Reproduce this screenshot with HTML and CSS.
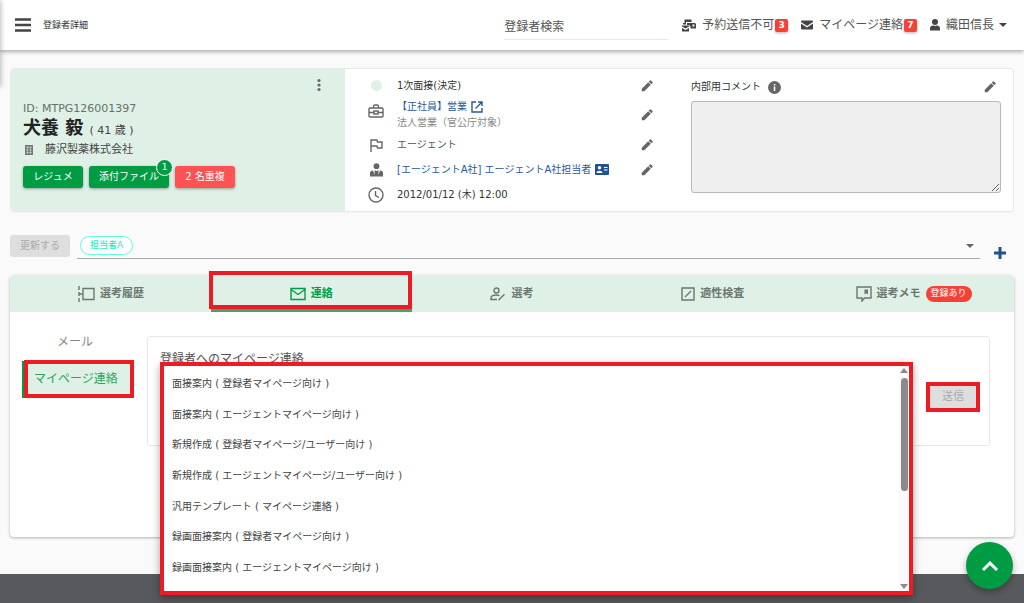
FILE: index.html
```html
<!DOCTYPE html>
<html lang="ja">
<head>
    <meta charset="UTF-8">
    <meta name="viewport" content="width=device-width, initial-scale=1.0">
    <title>登録者詳細</title>
    <link rel="stylesheet" href="styles.css">
</head>
<body>
    <svg class="defs">
        <symbol id="pencil" viewBox="0 0 24 24"><path d="M3 16.500V21h4.500L18.500 10l-4.500-4.500zM21.500 7a1.200 1.200 0 0 0 0-1.700l-2.800-2.800a1.200 1.200 0 0 0-1.700 0L15 4.500 19.500 9z"/></symbol>
        <symbol id="caret" viewBox="0 0 8 4"><path d="M0 0h8L4 4z"/></symbol>
    </svg>

    <div class="drawer"></div>

    <header class="header">
        <button class="icon-btn" aria-label="メニュー">
            <svg class="menu-icon" viewBox="0 0 16 14"><path d="M0 1.500h16M0 7h16M0 12.500h16"/></svg>
        </button>
        <h1 class="page-title">登録者詳細</h1>
        <input class="search" type="text" placeholder="登録者検索" aria-label="登録者検索">
        <nav class="header-nav">
            <a class="nav-item" href="#">
                <svg width="14" height="13" viewBox="0 0 28 26"><path d="M5 1h14v5H8v5H2V8h3zM10 8h16l2 2v9H17v-4l-3-3h-4zM0 13h14v2l-7 4-7-4zM0 18l7 4 7-4v6a1 1 0 0 1-1 1H1a1 1 0 0 1-1-1z"/><path class="cut" d="M21 11h4v4h-4z"/></svg>
                <span>予約送信不可</span><b class="badge">3</b>
            </a>
            <a class="nav-item" href="#">
                <svg width="12" height="10" viewBox="0 0 24 20"><path d="M2 1h20a2 2 0 0 1 2 2v1L12 12 0 4V3a2 2 0 0 1 2-2zM0 7l12 8 12-8v10a2 2 0 0 1-2 2H2a2 2 0 0 1-2-2z"/></svg>
                <span>マイページ連絡</span><b class="badge">7</b>
            </a>
            <a class="nav-item" href="#">
                <svg width="10" height="12" viewBox="0 0 20 24"><circle cx="10" cy="6" r="6"/><path d="M0 23v-4c0-4 3-6 6-6 3 1 5 1 8 0 3 0 6 2 6 6v4z"/></svg>
                <span>織田信長</span><svg class="user-caret" width="8" height="4"><use href="#caret"/></svg>
            </a>
        </nav>
    </header>

    <main class="main">
        <section class="profile">
            <div class="person">
                <button class="icon-btn more" aria-label="その他">
                    <svg width="4" height="14" viewBox="0 0 4 14"><circle cx="2" cy="2.500" r="1.600"/><circle cx="2" cy="7" r="1.600"/><circle cx="2" cy="11.500" r="1.600"/></svg>
                </button>
                <p class="person-id">ID: MTPG126001397</p>
                <h2 class="person-name">犬養 毅 <span class="age">( 41 歳 )</span></h2>
                <p class="company">
                    <svg width="8" height="10" viewBox="0 0 8 10"><path d="M0 0h8v10H0z"/><path class="windows" d="M2.500 1v8M5.500 1v8M1 2.500h6M1 5h6M1 7.500h6"/></svg>
                    <span>藤沢製薬株式会社</span>
                </p>
                <div class="actions">
                    <button class="btn">レジュメ</button>
                    <button class="btn">添付ファイル<span class="count">1</span></button>
                    <button class="btn btn-red">2 名重複</button>
                </div>
            </div>

            <ul class="details">
                <li class="row">
                    <span class="row-icon"><i class="dot"></i></span>
                    <span class="row-text">1次面接(決定)</span>
                    <button class="icon-btn" aria-label="編集"><svg class="pencil"><use href="#pencil"/></svg></button>
                </li>
                <li class="row row-tall">
                    <span class="row-icon"><svg class="line" width="16" height="16" viewBox="0 0 16 16"><path d="M2 5h12a1 1 0 0 1 1 1v7a1 1 0 0 1-1 1H2a1 1 0 0 1-1-1V6a1 1 0 0 1 1-1zM5.500 5V3l1-1h3l1 1v2M1 9.500h5M10 9.500h5M6 8h4v3H6z"/></svg></span>
                    <span class="row-text">
                        <a href="#">【正社員】営業
                            <svg class="link-icon" width="12" height="12" viewBox="0 0 12 12"><path d="M5 1H1v10h10V7M7 1h4v4M11 1L4.500 7.500"/></svg>
                        </a>
                        <small>法人営業（官公庁対象）</small>
                    </span>
                    <button class="icon-btn" aria-label="編集"><svg class="pencil"><use href="#pencil"/></svg></button>
                </li>
                <li class="row">
                    <span class="row-icon"><svg class="line" width="14" height="14" viewBox="0 0 14 14"><path d="M2 14V2h6l.5 2H13v6H8.500L8 8H2"/></svg></span>
                    <span class="row-text muted">エージェント</span>
                    <button class="icon-btn" aria-label="編集"><svg class="pencil"><use href="#pencil"/></svg></button>
                </li>
                <li class="row">
                    <span class="row-icon"><svg width="13" height="14" viewBox="0 0 13 14"><circle cx="6.500" cy="3.200" r="2.900"/><path d="M0 13.500V10c0-1.500 1-2.300 3-2.600l1.500 4.600V7.300L6.500 8l2-.7V12L10 7.400c2 .3 3 1.100 3 2.600v3.500zM6 9h1l.7 3.500h-2.400z"/></svg></span>
                    <span class="row-text">
                        <a href="#">[エージェントA社] エージェントA社担当者
                            <svg class="card-icon" width="14" height="11" viewBox="0 0 14 11"><rect width="14" height="11" rx="1"/><circle cx="4.500" cy="3.800" r="1.700"/><path d="M1.500 9c0-3 6-3 6 0zM9 3h3.500v1H9zM9 5.500h3.500v1H9z"/></svg>
                        </a>
                    </span>
                    <button class="icon-btn" aria-label="編集"><svg class="pencil"><use href="#pencil"/></svg></button>
                </li>
                <li class="row">
                    <span class="row-icon"><svg class="line" width="16" height="16" viewBox="0 0 16 16"><circle cx="8" cy="8" r="7"/><path d="M7.500 4v4.500l3.500 2"/></svg></span>
                    <span class="row-text">2012/01/12 (木) 12:00</span>
                </li>
            </ul>

            <div class="comment">
                <div class="comment-head">
                    <label for="comment">内部用コメント</label>
                    <svg class="info" width="13" height="13" viewBox="0 0 13 13"><circle cx="6.500" cy="6.500" r="6.500"/><path d="M5.800 5.600h1.500v4.400H5.800zM5.800 3h1.500v1.500H5.800z"/></svg>
                    <button class="icon-btn" aria-label="編集"><svg class="pencil"><use href="#pencil"/></svg></button>
                </div>
                <textarea id="comment" disabled></textarea>
            </div>
        </section>

        <div class="assign">
            <button class="btn btn-disabled" disabled>更新する</button>
            <div class="combo">
                <span class="chip">担当者A</span>
                <input type="text" aria-label="担当者">
                <button class="icon-btn" aria-label="開く"><svg width="8" height="4"><use href="#caret"/></svg></button>
            </div>
            <button class="icon-btn add" aria-label="追加"><svg class="plus" width="12" height="12" viewBox="0 0 12 12"><path d="M6 0v12M0 6h12"/></svg></button>
        </div>

        <section class="card">
            <nav class="tabs">
                <a class="tab" href="#">
                    <svg class="line" width="18" height="16" viewBox="0 0 18 16"><path d="M2 0v4M2 6v4M2 12v4M2 8h4M6 2.500h11v11H6z"/></svg>
                    <span>選考履歴</span>
                </a>
                <a class="tab active" href="#">
                    <svg class="line" width="16" height="14" viewBox="0 0 16 14"><path d="M1 1.500h14v11H1zM1 2.500l7 5 7-5"/></svg>
                    <span>連絡</span>
                </a>
                <a class="tab" href="#">
                    <svg class="line" width="16" height="14" viewBox="0 0 16 14"><circle cx="6.500" cy="3.500" r="2.500"/><path d="M7 12.500H1v-1.500c0-2 3-3 5.500-3 1 0 2 .2 3 .6M8.500 13.300l6-6"/></svg>
                    <span>選考</span>
                </a>
                <a class="tab" href="#">
                    <svg class="line" width="14" height="14" viewBox="0 0 14 14"><path d="M1 1h12v12H1zM4 10l6-6"/></svg>
                    <span>適性検査</span>
                </a>
                <a class="tab" href="#">
                    <svg class="line" width="16" height="16" viewBox="0 0 16 16"><path d="M1 1h14v11H8.500L6 15v-3H1z"/><path class="fill" d="M8.500 3.500h3.500v5l-1.700-1.200L8.500 8.500z"/></svg>
                    <span>選考メモ</span><em class="pill">登録あり</em>
                </a>
            </nav>

            <div class="card-body">
                <nav class="side">
                    <a class="side-item" href="#">メール</a>
                    <a class="side-item active" href="#">マイページ連絡</a>
                </nav>
                <div class="panel">
                    <h3>登録者へのマイページ連絡</h3>
                    <button class="btn btn-disabled send" disabled>送信</button>

                    <div class="dropdown">
                        <ul class="options" role="listbox" aria-label="テンプレート">
                            <li role="option">面接案内 ( 登録者マイページ向け )</li>
                            <li role="option">面接案内 ( エージェントマイページ向け )</li>
                            <li role="option">新規作成 ( 登録者マイページ/ユーザー向け )</li>
                            <li role="option">新規作成 ( エージェントマイページ/ユーザー向け )</li>
                            <li role="option">汎用テンプレート ( マイページ連絡 )</li>
                            <li role="option">録画面接案内 ( 登録者マイページ向け )</li>
                            <li role="option">録画面接案内 ( エージェントマイページ向け )</li>
                        </ul>
                        <div class="scrollbar">
                            <svg class="arrow-up" width="8" height="5" viewBox="0 0 8 5"><path d="M0 0h8L4 5z"/></svg>
                            <div class="track"><div class="thumb"></div></div>
                            <svg width="8" height="5" viewBox="0 0 8 5"><path d="M0 0h8L4 5z"/></svg>
                        </div>
                    </div>
                </div>
            </div>
        </section>
    </main>

    <footer class="footer"></footer>

    <button class="to-top" aria-label="トップへ">
        <svg width="18" height="12" viewBox="0 0 18 12"><path d="M2 10l7-7 7 7"/></svg>
    </button>
</body>
</html>
```
FILE: styles.css
```css
* {margin: 0; padding: 0; box-sizing: border-box;}
body {
    font: 10px/16px "DejaVu Sans", "Noto Sans CJK JP", sans-serif; color: #333; background: #fafafa;
    min-height: 100vh; display: flex; flex-direction: column;
}
ul {list-style: none;}
a {color: inherit; text-decoration: none;}
svg {display: block; fill: currentColor; flex: none;}
button, input, textarea {font: inherit; color: inherit;}
.defs {position: absolute; width: 0; height: 0;}
.icon-btn {border: 0; background: none; cursor: pointer; flex: none; color: #666;}
.line {fill: none; stroke: currentColor; stroke-width: 1.4;}
.pencil {width: 14px; height: 14px;}

/* closed drawer, only its shadow shows */
.drawer {position: fixed; z-index: 3; top: 0; left: -200px; width: 200px; height: 87px; box-shadow: 0 0 6px rgba(0,0,0,0.35);}

/* header */
.header {
    position: relative; z-index: 2; height: 50px; padding: 0 17px 0 15px; display: flex; align-items: center;
    background: #fff; box-shadow: 0 2px 4px rgba(0,0,0,0.3);
}
.menu-icon {width: 16px; height: 14px; stroke: #444; stroke-width: 2.4;}
.page-title {font-size: 9px; font-weight: normal; margin-left: 12px; flex: 1;}
.search {
    width: 164px; height: 30px; padding-top: 4px; margin-right: 14px; border: 0; border-bottom: 1px solid #e4eaea;
    background: none; font-size: 12px; outline: none;
}
.search::placeholder {color: #555; opacity: 1;}
.header-nav {display: flex; gap: 13px;}
.nav-item {display: flex; align-items: center; font-size: 12px; color: #444;}
.nav-item span {margin: 0 1px 0 6px; color: #555;}
.nav-item .cut {fill: #fff;}
.badge {
    width: 13px; height: 13px; border-radius: 2px; background: #f44336; color: #fff;
    font-size: 9px; line-height: 13px; text-align: center; box-shadow: 0 1px 3px rgba(0,0,0,0.3);
}
.user-caret {margin-left: 4px;}

.main {padding: 18px 10px 37px;}

/* profile */
.profile {
    display: grid; grid-template-columns: repeat(3, 1fr); background: #fff;
    border: 1px solid #e6eae8; border-radius: 4px; box-shadow: 0 1px 1px rgba(0,0,0,0.03);
}
.person {position: relative; padding: 32px 12px 20px; background: #dff1e6; border-radius: 3px 0 0 3px;}
.more {position: absolute; top: 9px; right: 24px;}
.person-id {font-size: 11px; color: #667069;}
.person-name {font-size: 18px; line-height: 22px; color: #222;}
.age {font-size: 11px; font-weight: normal; color: #444;}
.company {display: flex; align-items: center; gap: 12px; padding: 0 2px; font-size: 11px; color: #444;}
.company svg {color: #777;}
.windows {stroke: #c8d6cd; stroke-width: 0.6;}
.actions {display: flex; gap: 6px; margin-top: 8px;}
.btn {
    position: relative; min-width: 60px; height: 22px; padding: 0 10px; border: 0; border-radius: 3px;
    background: #009c44; color: #fff; line-height: 20px; white-space: nowrap; box-shadow: 0 1px 3px rgba(0,0,0,0.35);
}
.btn-red {background: #ff5252;}
.btn-disabled {background: #dedede; color: #aaa; box-shadow: none;}
.count {
    position: absolute; top: -7px; right: -4px; width: 17px; height: 17px; border: 1px solid #fff; border-radius: 50%;
    background: #009c44; font-size: 9px; line-height: 15px;
}

.details {padding: 4px 25px 4px 22px;}
.row {height: 25px; display: flex; align-items: center;}
.row-tall {height: 34px;}
.row-icon {width: 18px; margin-right: 12px; display: flex; justify-content: center; color: #666;}
.row-tall .row-icon {align-self: flex-start; padding-top: 5px;}
.row-text {flex: 1; white-space: nowrap;}
.row-text a {display: flex; align-items: center; gap: 4px; color: #2a5a95;}
.row-text small {display: block; font-size: 10px; color: #888;}
.muted {color: #555;}
.dot {width: 11px; height: 11px; border-radius: 50%; background: #dff1e6;}
.link-icon {fill: none; stroke: #2a5a95; stroke-width: 1.4;}
.card-icon {fill: #fff;}
.card-icon rect {fill: #22528c;}

.comment {padding: 8px 12px 18px; display: flex; flex-direction: column;}
.comment-head {display: flex; align-items: center; height: 20px; margin-bottom: 4px; padding-right: 4px;}
.info {margin: 0 auto 0 7px; color: #666;}
.info path {fill: #fff;}
.comment textarea {flex: 1; width: 100%; background: #efefef; border: 1px solid #b8b8b8; border-radius: 3px;}

/* assignee */
.assign {display: flex; align-items: center; margin-top: 21px; padding: 0 8px 0 0;}
.combo {flex: 1; display: flex; align-items: center; height: 26px; margin: 0 14px 0 7px; padding: 0 6px 0 3px; border-bottom: 1px solid #aaa;}
.combo input {flex: 1; min-width: 0; border: 0; background: none; outline: none;}
.chip {height: 19px; padding: 0 9px; border: 1px solid #64ffda; border-radius: 10px; background: #fff; color: #1ff0bd; font-size: 9px; font-weight: 500; line-height: 17px;}
.add {align-self: flex-end;}
.plus {stroke: #22528c; stroke-width: 3;}

/* tabs */
.card {margin-top: 16px; background: #fff; border-radius: 4px; box-shadow: 0 1px 3px rgba(0,0,0,0.3);}
.tabs {display: grid; grid-template-columns: repeat(5, 1fr); height: 37px; background: #dff1e6; border-radius: 4px 4px 0 0;}
.tab {position: relative; display: flex; align-items: center; justify-content: center; gap: 5px; font-size: 11px; font-weight: bold; color: #6a766f;}
.tab .fill {fill: currentColor; stroke: none;}
.tab.active {color: #009c44; box-shadow: inset 0 -3px #3fa66c;}
.tab.active::after, .side-item.active::after {content: ""; position: absolute; border: 4px solid #ed1c24;}
.tab.active::after {inset: -4px 0 3px -2px;}
.pill {height: 16px; padding: 0 5px; border-radius: 8px; background: #f44336; color: #fff; font-size: 9px; font-style: normal; font-weight: normal; line-height: 15px;}

.card-body {display: flex; align-items: flex-start; gap: 13px; padding: 12px 24px 91px 12px;}
.side {width: 112px;}
.side-item {position: relative; display: block; height: 37px; padding-right: 6px; font-size: 12px; line-height: 37px; text-align: center; color: #888;}
.side-item.active {border-left: 2px solid #009c44; background: #dff1e6; color: #2aa45f;}
.side-item.active::after {inset: -1px 0 0 0;}
.panel {
    position: relative; flex: 1; min-height: 110px; margin-top: 12px; padding: 13px 13px 12px 12px;
    display: flex; flex-direction: column; border: 1px solid #e8e8e8; border-radius: 3px;
}
.panel h3 {font-size: 12px; line-height: 18px; font-weight: normal; color: #555;}
.send {align-self: flex-end; min-width: 46px; margin-top: 18px; border-radius: 0; font-size: 11px; outline: 4px solid #ed1c24;}

/* template list */
.dropdown {
    position: absolute; z-index: 1; top: 25px; left: 12px; right: 76px; height: 233px; display: flex;
    background: #fff; border: 4px solid #ed1c24; box-shadow: 0 3px 8px rgba(0,0,0,0.35);
}
.options {flex: 1; display: flex; flex-direction: column; padding: 3px 8px 8px;}
.options li {flex: 1; display: flex; align-items: center; white-space: pre; color: #444;}
.scrollbar {width: 10px; display: flex; flex-direction: column; align-items: center; padding: 2px 0; color: #8a8a8a; background: #fafafa;}
.arrow-up {transform: rotate(180deg);}
.track {flex: 1; width: 7px; padding: 5px 0;}
.thumb {height: 56%; border-radius: 4px; background: #8a8a8a;}

.footer {flex: 1; min-height: 29px; background: #58595d;}
.to-top {
    position: fixed; z-index: 2; right: 11px; bottom: 14px; width: 47px; height: 47px; border: 0; border-radius: 50%;
    display: flex; align-items: center; justify-content: center; background: #009c44; box-shadow: 0 3px 6px rgba(0,0,0,0.3);
}
.to-top svg {fill: none; stroke: #fff; stroke-width: 3;}
```
